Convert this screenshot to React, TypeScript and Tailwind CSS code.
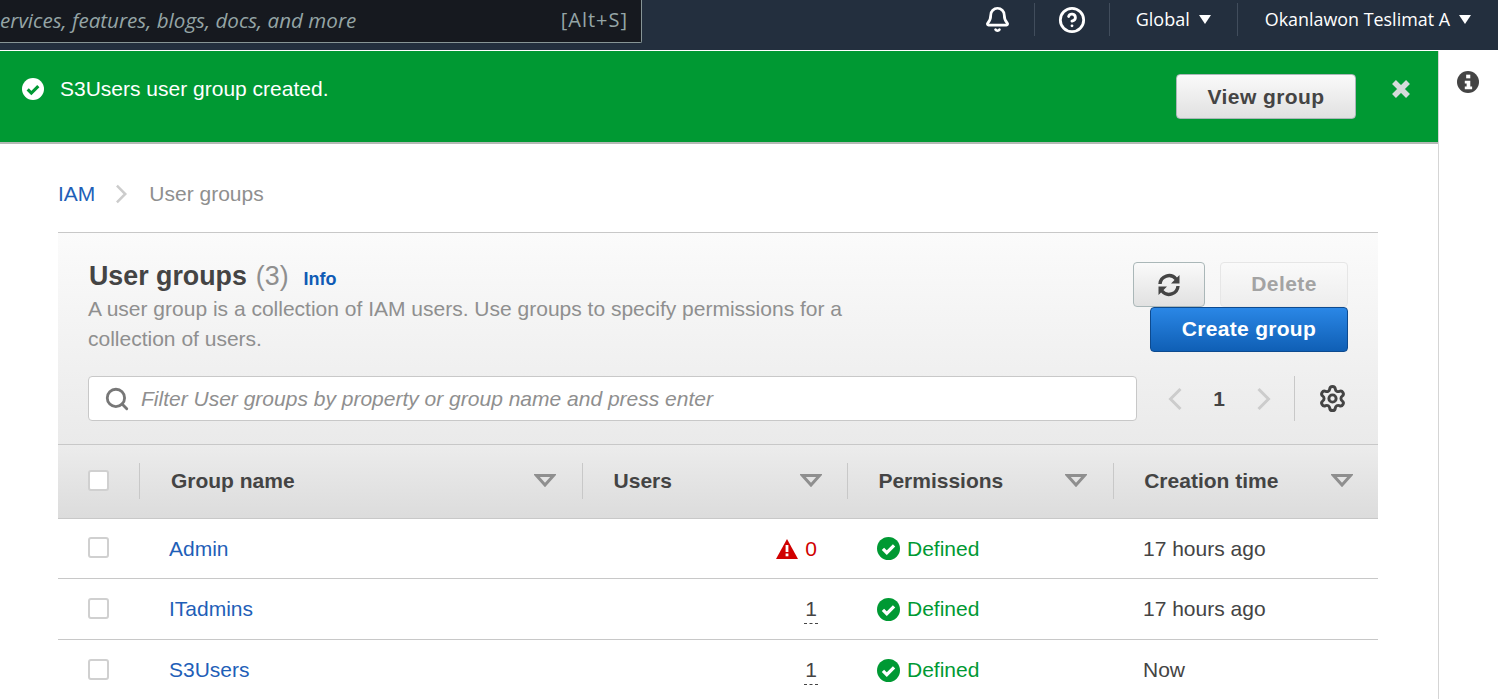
import { Bell, CircleHelp, Search, Settings } from "lucide-react";

const rows = [
  { name: "Admin", users: 0, time: "17 hours ago", top: "h-[60px]" },
  { name: "ITadmins", users: 1, time: "17 hours ago", top: "h-[61px]" },
  { name: "S3Users", users: 1, time: "Now", top: "h-[60px]" },
];

const columns = [
  { label: "Group name", w: "w-[443px]", pl: "pl-[31px]", pr: "pr-[26px]" },
  { label: "Users", w: "w-[266px]", pl: "pl-[31px]", pr: "pr-[25px]" },
  { label: "Permissions", w: "w-[266px]", pl: "pl-[30px]", pr: "pr-[26px]" },
  { label: "Creation time", w: "w-[264px]", pl: "pl-[30px]", pr: "pr-[25px]" },
];

function CheckCircle({ className, fill, tick }: { className: string; fill: string; tick: string }) {
  return (
    <svg viewBox="0 0 24 24" className={className}>
      <circle cx="12" cy="12" r="12" fill={fill} />
      <path d="M6.2 12.4l4 4 7.6-7.6" fill="none" stroke={tick} strokeWidth="3.4" />
    </svg>
  );
}

function SortCaret() {
  return (
    <svg viewBox="0 0 22 13" className="h-[13px] w-[22px]">
      <path d="M2.5 1.5h17L11 11z" fill="none" stroke="#8f8f8f" strokeWidth="3" />
    </svg>
  );
}

function Chevron({ className, left }: { className: string; left?: boolean }) {
  return (
    <svg viewBox="0 0 14 24" className={className}>
      <path d={left ? "M12.500 2L2.500 12l10 10" : "M1.500 2l10 10-10 10"} fill="none" stroke="#cccccc" strokeWidth="3" />
    </svg>
  );
}

function Divider({ className }: { className: string }) {
  return <div className={className} />;
}

export default function App() {
  return (
    <div className="h-[699px] w-[1498px] overflow-hidden bg-white font-['Liberation_Sans',Arial,sans-serif] text-[21px] text-[#444]">
      {/* top nav */}
      <header className="flex h-[50px] items-start justify-between bg-[#232f3e] font-['Open_Sans',sans-serif]">
        <div className="flex h-[43px] w-[642px] items-center justify-between overflow-hidden rounded-br-[2px] border-r border-b border-[#879596] bg-[#16191f] pb-[2px] pr-[13px] text-[#95a5a6]">
          <span className="shrink-0 whitespace-nowrap text-[20.600px] italic leading-[40px]">ervices, features, blogs, docs, and more</span>
          <span className="text-[20px] tracking-[1px]">[Alt+S]</span>
        </div>
        <div className="flex h-[39px] items-center text-[18px] text-white">
          <Bell className="mr-[23px] h-[27px] w-[27px]" strokeWidth={2.4} />
          <Divider className="mr-[23px] h-[33px] w-px bg-[#414d5c]" />
          <CircleHelp className="mr-[23px] h-[28px] w-[28px]" strokeWidth={2.4} />
          <Divider className="mr-[26px] h-[33px] w-px bg-[#414d5c]" />
          <span>Global</span>
          <span className="ml-[9px] mr-[26px] h-0 w-0 border-x-[6px] border-t-[9px] border-x-transparent border-t-white" />
          <Divider className="mr-[27px] h-[33px] w-px bg-[#414d5c]" />
          <span className="text-[17.900px]">Okanlawon Teslimat A</span>
          <span className="ml-[9px] mr-[27px] h-0 w-0 border-x-[6px] border-t-[9px] border-x-transparent border-t-white" />
        </div>
      </header>

      <div className="flex h-[649px] border-t border-white">
        <main className="w-[1438px]">
          {/* flash */}
          <div className="flex h-[93px] items-start border-b-2 border-[#b4b9b5] bg-[#009933] pl-[22px] pr-[27px] text-white">
            <CheckCircle className="mt-[27px] h-[22px] w-[22px]" fill="#fff" tick="#009933" />
            <span className="ml-[16px] mt-[24px] leading-[28px]">S3Users user group created.</span>
            <button className="ml-auto mt-[23px] h-[45px] w-[180px] rounded-[4px] border border-[#aab7b8] bg-gradient-to-b from-[#fafafa] to-[#e1e1e1] text-[21px] font-bold tracking-[0.4px] text-[#444]">
              View group
            </button>
            <svg viewBox="0 0 20 20" className="ml-[35px] mt-[28px] h-[20px] w-[20px]">
              <path d="M3 3l14 14M17 3L3 17" stroke="#d5dbdb" strokeWidth="5.500" />
            </svg>
          </div>

          {/* breadcrumb */}
          <nav className="flex h-[88px] items-center pl-[58px] pt-[11px]">
            <span className="text-[#1f5fb8]">IAM</span>
            <Chevron className="ml-[20px] h-[20px] w-[13px]" />
            <span className="ml-[21px] text-[#8f8f8f]">User groups</span>
          </nav>

          <section className="ml-[58px] w-[1320px]">
            {/* table header */}
            <div className="border-t border-[#c8c8c8] bg-gradient-to-b from-[#fbfbfb] to-[#eaeaea]">
              <div className="flex h-[143px] justify-between pl-[30px] pr-[30px] pt-[29px]">
                <div className="mt-[-1px]">
                  <div className="flex items-baseline">
                    <h1 className="ml-[1px] text-[26.800px] font-bold leading-[30px] text-[#444]">User groups</h1>
                    <span className="ml-[9px] text-[26.800px] leading-[30px] text-[#8f8f8f]">(3)</span>
                    <span className="ml-[15px] text-[18px] font-bold text-[#0f5bb5]">Info</span>
                  </div>
                  <p className="mt-[1px] w-[790px] leading-[30px] text-[#8f8f8f]">
                    A user group is a collection of IAM users. Use groups to specify permissions for a collection of users.
                  </p>
                </div>
                <div className="flex w-[215px] flex-col items-end">
                  <div className="flex">
                    <button className="mr-[15px] flex h-[45px] w-[72px] items-center justify-center rounded-[4px] border border-[#aab7b8] bg-gradient-to-b from-[#fafafa] to-[#e1e1e1]">
                      <svg viewBox="0 0 24 24" className="h-[24px] w-[24px]" fill="none" stroke="#444" strokeWidth="3.400">
                        <path d="M3 11a9 9 0 0 1 16-5l2 2" />
                        <path d="M21 13a9 9 0 0 1-16 5l-2-2" />
                        <path d="M22.500 2v8.500H14zM1.500 22v-8.500H10z" fill="#444" stroke="none" />
                      </svg>
                    </button>
                    <button className="h-[45px] w-[128px] rounded-[4px] border border-[#e6e6e6] bg-gradient-to-b from-[#fafafa] to-[#ededed] pb-[2px] text-[21px] font-bold tracking-[0.4px] text-[#a3a3a3]">
                      Delete
                    </button>
                  </div>
                  <button className="h-[45px] w-[198px] rounded-[4px] border border-[#0d4a8f] bg-gradient-to-b from-[#2a87e6] to-[#0f5fb5] pb-[2px] text-[21px] font-bold tracking-[0.3px] text-white">
                    Create group
                  </button>
                </div>
              </div>

              {/* filter row */}
              <div className="flex h-[68px] items-start pl-[30px]">
                <div className="flex h-[45px] w-[1049px] items-center rounded-[4px] border border-[#c8c8c8] bg-white pl-[15px]">
                  <Search className="h-[26px] w-[26px] text-[#777]" strokeWidth={2.6} />
                  <span className="ml-[11px] italic text-[#8f8f8f]">Filter User groups by property or group name and press enter</span>
                </div>
                <div className="ml-[30px] flex h-[45px] items-center">
                  <Chevron left className="h-[24px] w-[16px]" />
                  <span className="ml-[30px] w-[12px] text-center font-bold text-[#444]">1</span>
                  <Chevron className="ml-[31px] h-[24px] w-[16px]" />
                  <Divider className="ml-[22px] h-[45px] w-px bg-[#c8c8c8]" />
                  <Settings className="ml-[23px] h-[29px] w-[29px] text-[#444]" strokeWidth={2.400} />
                </div>
              </div>
            </div>

            {/* column headings */}
            <div className="flex h-[75px] items-center border-y border-[#c8c8c8] bg-gradient-to-b from-[#ececec] to-[#dcdcdc]">
              <div className="mt-[-2px] flex h-[36px] w-[82px] items-center border-r border-[#c8c8c8] pl-[30px]">
                <span className="h-[21px] w-[21px] rounded-[3px] border-2 border-[#d0d0d0] bg-white" />
              </div>
              {columns.map((c, i) => (
                <div
                  key={c.label}
                  className={`mt-[-2px] flex h-[36px] items-center justify-between ${c.w} ${c.pl} ${c.pr} ${i < columns.length - 1 ? "border-r border-[#c8c8c8]" : ""}`}
                >
                  <span className="font-bold text-[#444]">{c.label}</span>
                  <SortCaret />
                </div>
              ))}
            </div>

            {/* rows */}
            {rows.map((r, i) => (
              <div key={r.name} className={`flex items-center ${r.top} ${i < 2 ? "border-b border-[#c8c8c8]" : ""}`}>
                <div className="w-[82px] pl-[30px]">
                  <span className="mt-[-2px] block h-[21px] w-[21px] rounded-[3px] border-2 border-[#d0d0d0] bg-white" />
                </div>
                <div className="w-[443px] pl-[29px] text-[#1f5fb8]">{r.name}</div>
                <div className="flex w-[234px] justify-end">
                  {r.users === 0 ? (
                    <span className="flex items-center text-[#d00000]">
                      <svg viewBox="0 0 22 20" className="h-[20px] w-[22px]">
                        <path d="M11 0l11 20H0z" fill="#d00000" />
                        <rect x="9.600" y="6" width="2.800" height="7" fill="#fff" />
                        <rect x="9.600" y="14.500" width="2.800" height="2.800" fill="#fff" />
                      </svg>
                      <span className="ml-[7px]">0</span>
                    </span>
                  ) : (
                    <span className="relative block w-[12px] text-center text-[#444]">
                      1
                      <span className="absolute left-[-1px] top-[30px] w-[14px] border-b border-dashed border-[#444]" />
                    </span>
                  )}
                </div>
                <div className="ml-[60px] flex w-[266px] items-center text-[#009933]">
                  <CheckCircle className="h-[23px] w-[23px]" fill="#009933" tick="#fff" />
                  <span className="ml-[7px]">Defined</span>
                </div>
                <div className="text-[#444]">{r.time}</div>
              </div>
            ))}
          </section>
        </main>

        <aside className="flex w-[60px] justify-center border-l border-[#d5d5d5] pr-[1px] pt-[20px]">
          <svg viewBox="0 0 24 24" className="h-[22px] w-[22px]">
            <circle cx="12" cy="12" r="12" fill="#444" />
            <rect x="10" y="4" width="4.500" height="4" fill="#fff" />
            <path d="M8.500 10.500h6V17h2v3h-8v-3h2v-3.500h-2z" fill="#fff" />
          </svg>
        </aside>
      </div>
    </div>
  );
}
